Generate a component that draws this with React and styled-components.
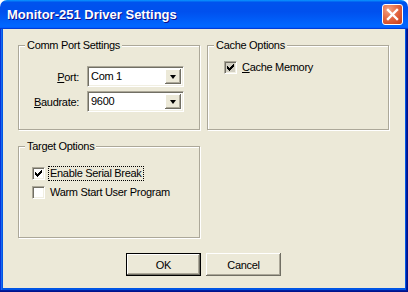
import React from "react";
import styled, { createGlobalStyle } from "styled-components";

const GlobalStyle = createGlobalStyle`
  html, body {
    margin: 0;
    padding: 0;
    background: #fff;
  }
  body {
    font-family: "Liberation Sans", Arial, sans-serif;
    font-size: 11px;
    letter-spacing: -0.3px;
    color: #000;
  }
`;

const Window = styled.div`
  width: 408px;
  height: 292px;
  display: flex;
  flex-direction: column;
`;

const TitleBar = styled.div`
  height: 29px;
  flex: none;
  display: flex;
  align-items: center;
  padding: 0 5px 0 7px;
  border-radius: 7px 7px 0 0;
  background: linear-gradient(
    180deg,
    #0997ff,
    #0053ee 8%,
    #0050ee 40%,
    #06f 88%,
    #06f 93%,
    #005bff 95%,
    #003dd7 96%,
    #003dd7
  );
`;

const Title = styled.div`
  flex: 1;
  color: #fff;
  font: bold 13px "Liberation Sans", Arial, sans-serif;
  letter-spacing: 0;
  text-shadow: 1px 1px #0f1089;
`;

const CloseButton = styled.div`
  width: 21px;
  height: 21px;
  box-sizing: border-box;
  border: 1px solid #fff;
  border-radius: 3px;
  display: flex;
  align-items: center;
  justify-content: center;
  background: radial-gradient(circle at 30% 25%, #f4a283 0%, #e46a45 45%, #d04a26 80%, #c23c1b 100%);
`;

const Frame = styled.div`
  flex: 1;
  display: flex;
  padding: 0 4px 4px 3px;
  background: #0055e5;
  box-shadow: inset -1px -1px #00138c, inset -2px -2px #001ea0, inset 1px 0 #0831d9,
    inset 2px 0 #166aee;
`;

const Client = styled.div`
  flex: 1;
  display: flex;
  flex-direction: column;
  background: #ece9d8;
  padding: 16px 16px 0 15px;
`;

const Groups = styled.div`
  display: grid;
  grid-template-columns: 182px 182px;
  grid-template-rows: 85px 92px;
  column-gap: 7px;
  row-gap: 16px;
`;

const GroupBox = styled.div`
  border: 1px solid #aca899;
  box-shadow: inset 1px 1px #fff, 1px 1px #fff;
  display: flex;
  flex-direction: column;
  align-items: flex-start;
  padding-left: ${(p) => p.$indent}px;
`;

const Legend = styled.div`
  margin: -7px 0 0 ${(p) => 6 - p.$indent}px;
  padding: 0 2px;
  line-height: 13px;
  background: #ece9d8;
`;

const FieldGrid = styled.div`
  display: grid;
  grid-template-columns: 60px 97px;
  column-gap: 8px;
  row-gap: 4px;
  align-items: center;
  margin-top: 14px;
`;

const FieldLabel = styled.div`
  text-align: right;
`;

const Combo = styled.div`
  height: 21px;
  box-sizing: border-box;
  display: flex;
  padding: 2px;
  background: #fff;
  border: 1px solid;
  border-color: #aca899 #fff #fff #aca899;
  box-shadow: inset 1px 1px #716f64, inset -1px -1px #f1efe2;
`;

const ComboText = styled.div`
  flex: 1;
  padding-left: 1px;
  line-height: 15px;
`;

const DropButton = styled.div`
  width: 16px;
  display: flex;
  align-items: center;
  justify-content: center;
  background: #ece9d8;
  box-shadow: inset -1px -1px #716f64, inset 1px 1px #fff, inset -2px -2px #aca899;

  &::after {
    content: "";
    border-left: 3.5px solid transparent;
    border-right: 3.5px solid transparent;
    border-top: 4px solid #000;
    margin-top: 1px;
  }
`;

const CheckList = styled.div`
  display: flex;
  flex-direction: column;
  gap: 4px;
  margin-top: ${(p) => p.$top}px;
`;

const CheckRow = styled.div`
  display: flex;
  align-items: center;
  gap: 3px;
  height: 15px;
`;

const CheckBox = styled.div`
  width: 13px;
  height: 13px;
  box-sizing: border-box;
  display: flex;
  align-items: center;
  justify-content: center;
  background: ${(p) => (p.$shaded ? "#d2cfc2" : "#fff")};
  border: 1px solid;
  border-color: #aca899 #fff #fff #aca899;
  box-shadow: inset 1px 1px #716f64, inset -1px -1px #f1efe2;
`;

const CheckLabel = styled.span`
  padding: 0 1px;
  line-height: 13px;
  border: 1px ${(p) => (p.$focus ? "dotted #000" : "solid transparent")};
`;

const ButtonRow = styled.div`
  display: flex;
  justify-content: center;
  gap: 5px;
  margin-top: 15px;
`;

const Button = styled.div`
  width: 75px;
  height: 23px;
  box-sizing: border-box;
  display: flex;
  align-items: center;
  justify-content: center;
  background: #ece9d8;
  border: ${(p) => (p.$default ? "1px solid #000" : "none")};
  box-shadow: inset -1px -1px #716f64, inset 1px 1px #fff, inset -2px -2px #aca899;
`;

const Check = () => (
  <svg width="7" height="7" viewBox="0 0 7 7" shapeRendering="crispEdges">
    <rect x="0" y="2" width="1" height="3" fill="#000" />
    <rect x="1" y="3" width="1" height="3" fill="#000" />
    <rect x="2" y="4" width="1" height="3" fill="#000" />
    <rect x="3" y="3" width="1" height="3" fill="#000" />
    <rect x="4" y="2" width="1" height="3" fill="#000" />
    <rect x="5" y="1" width="1" height="3" fill="#000" />
    <rect x="6" y="0" width="1" height="3" fill="#000" />
  </svg>
);

const CloseIcon = () => (
  <svg width="19" height="19" viewBox="0 0 19 19">
    <path d="M5 5 L14 14 M14 5 L5 14" stroke="#fff" strokeWidth="2.4" strokeLinecap="square" />
  </svg>
);

const Option = ({ checked, shaded, focus, children }) => (
  <CheckRow>
    <CheckBox $shaded={shaded}>{checked && <Check />}</CheckBox>
    <CheckLabel $focus={focus}>{children}</CheckLabel>
  </CheckRow>
);

export default function App() {
  return (
    <>
      <GlobalStyle />
      <Window>
        <TitleBar>
          <Title>Monitor-251 Driver Settings</Title>
          <CloseButton>
            <CloseIcon />
          </CloseButton>
        </TitleBar>
        <Frame>
          <Client>
            <Groups>
              <GroupBox $indent={0}>
                <Legend $indent={0}>Comm Port Settings</Legend>
                <FieldGrid>
                  <FieldLabel>
                    <u>P</u>ort:
                  </FieldLabel>
                  <Combo>
                    <ComboText>Com 1</ComboText>
                    <DropButton />
                  </Combo>
                  <FieldLabel>
                    <u>B</u>audrate:
                  </FieldLabel>
                  <Combo>
                    <ComboText>9600</ComboText>
                    <DropButton />
                  </Combo>
                </FieldGrid>
              </GroupBox>
              <GroupBox $indent={16}>
                <Legend $indent={16}>Cache Options</Legend>
                <CheckList $top={8}>
                  <Option checked shaded>
                    <u>C</u>ache Memory
                  </Option>
                </CheckList>
              </GroupBox>
              <GroupBox $indent={13}>
                <Legend $indent={13}>Target Options</Legend>
                <CheckList $top={13}>
                  <Option checked focus>
                    Enable Serial Break
                  </Option>
                  <Option>Warm Start User Program</Option>
                </CheckList>
              </GroupBox>
            </Groups>
            <ButtonRow>
              <Button $default>OK</Button>
              <Button>Cancel</Button>
            </ButtonRow>
          </Client>
        </Frame>
      </Window>
    </>
  );
}
